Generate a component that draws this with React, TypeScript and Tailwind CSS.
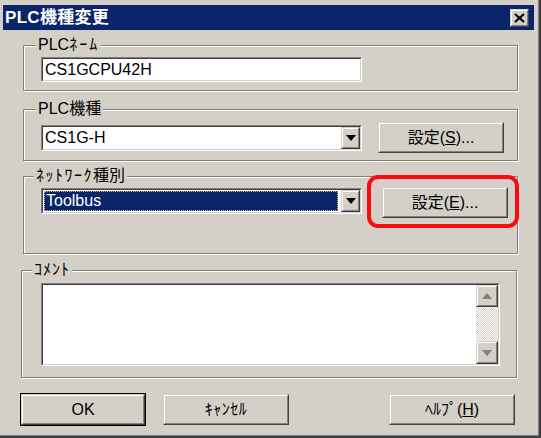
import React from "react";

const FONT = { fontFamily: '"Liberation Sans", "Noto Sans CJK JP", sans-serif' };

function Raised({ className = "", innerClass = "", children }: { className?: string; innerClass?: string; children?: React.ReactNode }) {
  return (
    <div className={`border border-t-[#d4d0c8] border-l-[#d4d0c8] border-b-[#404040] border-r-[#404040] bg-[#d4d0c8] ${className}`}>
      <div className={`h-full w-full border border-t-white border-l-white border-b-[#808080] border-r-[#808080] ${innerClass}`}>{children}</div>
    </div>
  );
}

function Sunken({ className = "", innerClass = "", children }: { className?: string; innerClass?: string; children?: React.ReactNode }) {
  return (
    <div className={`border border-t-[#808080] border-l-[#808080] border-b-white border-r-white ${className}`}>
      <div className={`h-full w-full border border-t-[#404040] border-l-[#404040] border-b-[#d4d0c8] border-r-[#d4d0c8] ${innerClass}`}>{children}</div>
    </div>
  );
}

function Arrow({ dir = "down", color = "#000" }: { dir?: "up" | "down"; color?: string }) {
  return (
    <svg width="10" height="6" viewBox="0 0 10 6">
      {dir === "down" ? <polygon points="0,0 10,0 5,6" fill={color} /> : <polygon points="0,6 10,6 5,0" fill={color} />}
    </svg>
  );
}

function Combo({ children }: { children?: React.ReactNode }) {
  return (
    <Sunken className="w-[321px] h-[26px] bg-white" innerClass="flex">
      <div className="flex-1 flex items-stretch min-w-0">{children}</div>
      <Raised className="w-[19px] h-full" innerClass="flex items-center justify-center">
        <Arrow />
      </Raised>
    </Sunken>
  );
}

function Button({ className = "", children }: { className?: string; children?: React.ReactNode }) {
  return (
    <Raised className={`h-[31px] ${className}`} innerClass="flex items-center justify-center text-[16px] text-black">
      {children}
    </Raised>
  );
}

function Group({ label, className = "", children, labelLeft = "left-[12px]" }: { label: React.ReactNode; className?: string; children?: React.ReactNode; labelLeft?: string }) {
  return (
    <div className={`relative border border-[#808080] shadow-[inset_1px_1px_0_#fff,1px_1px_0_#fff] ${className}`}>
      <div className={`absolute -top-[10px] ${labelLeft} px-[2px] bg-[#d4d0c8] text-[16px] leading-[18px] text-black whitespace-nowrap`}>{label}</div>
      {children}
    </div>
  );
}

export default function App() {
  return (
    <div style={FONT} className="relative w-[541px] h-[438px] bg-[#d4d0c8] overflow-hidden">
      <div className="w-[541px] h-[438px] flex flex-col pt-[5px] pl-[3px] pr-[5px] border-r-2 border-b-2 border-r-[#404040] border-b-[#404040] shadow-[inset_-1px_-1px_0_#808080]">
        {/* Title bar */}
        <div className="h-[25px] bg-[#0a246a] flex items-center justify-between pl-[2px] pr-[5px] shrink-0">
          <span className="text-white font-bold text-[17px] leading-none tracking-[0.3px]">PLC機種変更</span>
          <Raised className="w-[19px] h-[18px]" innerClass="flex items-center justify-center">
            <svg width="11" height="10" viewBox="0 0 11 10">
              <path d="M1 1 L10 9 M10 1 L1 9" stroke="#000" strokeWidth="2.2" />
            </svg>
          </Raised>
        </div>

        {/* PLC name */}
        <Group label={<span>PLC<span className="tracking-[2px]">ﾈｰﾑ</span></span>} className="mt-[15px] ml-[20px] w-[495px] h-[46px] pl-[17px] pt-[11px] shrink-0">
          <Sunken className="w-[321px] h-[25px] bg-white" innerClass="flex items-center pl-[2px] text-[16px] text-black">
            CS1GCPU42H
          </Sunken>
        </Group>

        {/* PLC type */}
        <Group label="PLC機種" className="mt-[18px] ml-[20px] w-[495px] h-[52px] pl-[17px] pt-[12px] shrink-0">
          <div className="flex items-center">
            <Combo>
              <div className="flex items-center pl-[2px] text-[16px] text-black">CS1G-H</div>
            </Combo>
            <Button className="ml-[16px] w-[126px]">
              <span>設定(<span className="underline">S</span>)...</span>
            </Button>
          </div>
        </Group>

        {/* Network type */}
        <Group label={<span><span className="tracking-[1.5px]">ﾈｯﾄﾜｰｸ</span>種別</span>} labelLeft="left-[10px]" className="mt-[15px] ml-[20px] w-[495px] h-[78px] pl-[17px] pt-[11px] shrink-0">
          <div className="flex items-start">
            <Combo>
              <div className="flex-1 m-[1px] mr-[3px] bg-[#0a246a] border border-dotted border-[#d8c070] flex items-center pl-[1px] text-[16px] text-white">
                Toolbus
              </div>
            </Combo>
            <Button className="ml-[20px] -mt-[1px] w-[126px]">
              <span>設定(<span className="underline">E</span>)...</span>
            </Button>
          </div>
        </Group>

        {/* Comment */}
        <Group label={<span className="tracking-[1px]">ｺﾒﾝﾄ</span>} labelLeft="left-[10px]" className="mt-[16px] ml-[18px] w-[496px] h-[108px] pl-[19px] pt-[12px] shrink-0">
          <Sunken className="w-[459px] h-[83px] bg-white" innerClass="flex justify-end">
            <div className="w-[22px] h-full flex flex-col bg-[repeating-conic-gradient(#ffffff_0_25%,#d4d0c8_0_50%)] bg-[length:2px_2px]">
              <Raised className="w-[22px] h-[22px]" innerClass="flex items-center justify-center">
                <Arrow dir="up" color="#808080" />
              </Raised>
              <div className="flex-1" />
              <Raised className="w-[22px] h-[23px]" innerClass="flex items-center justify-center">
                <Arrow dir="down" color="#808080" />
              </Raised>
            </div>
          </Sunken>
        </Group>

        {/* Buttons */}
        <div className="mt-[15px] ml-[17px] flex items-center shrink-0">
          <div className="border border-black">
            <Button className="w-[124px] h-[28px]">OK</Button>
          </div>
          <Button className="ml-[17px] w-[126px] h-[30px]">
            <span className="tracking-[0.5px]">ｷｬﾝｾﾙ</span>
          </Button>
          <div className="flex-1" />
          <Button className="mr-[19px] w-[126px] h-[30px]">
            <span>ﾍﾙﾌﾟ(<span className="underline">H</span>)</span>
          </Button>
        </div>
      </div>

      {/* red annotation */}
      <div className="absolute left-[367px] top-[175px] w-[152px] h-[53px] border-[4px] border-[#ff0a0a] rounded-[11px] pointer-events-none" />
    </div>
  );
}
